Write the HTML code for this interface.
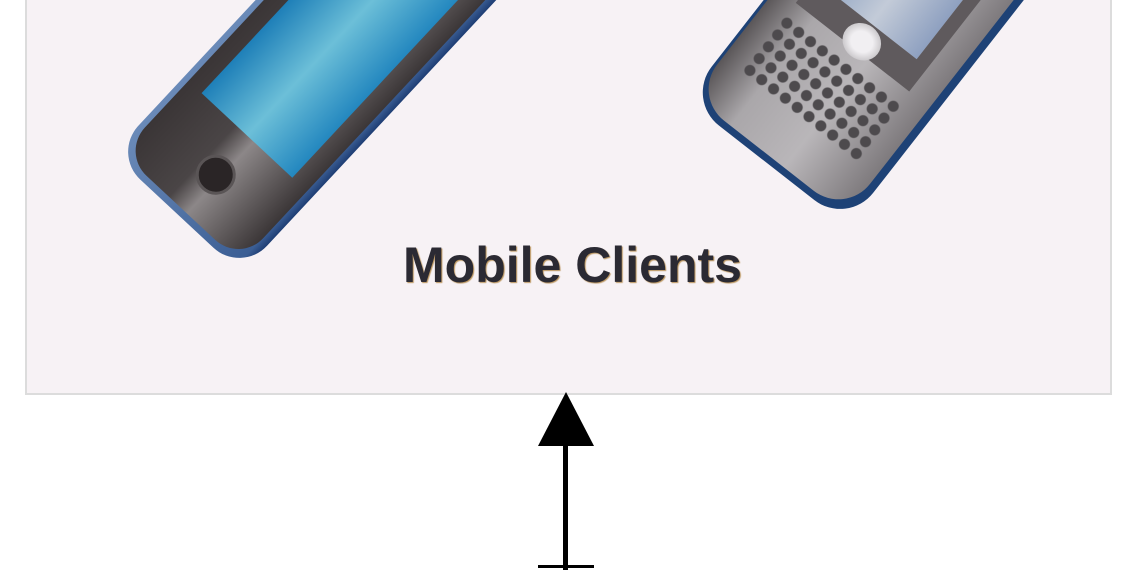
<!DOCTYPE html>
<html><head><style>
body{margin:0;width:1140px;height:570px;background:#fff;overflow:hidden;position:relative;font-family:"Liberation Sans",sans-serif}
.box{position:absolute;left:25px;top:-5px;width:1083px;height:396px;background:#f7f2f5;border:2px solid #dcdcdc}
.ip{position:absolute;left:232px;top:-150px;width:176px;height:420px;border-radius:38px;background:linear-gradient(90deg,#6a8ab8,#3b5e94 95%,#1e3d73);transform:rotate(43deg)}
.ip .in{position:absolute;left:6px;top:5px;right:8px;bottom:7px;border-radius:34px;background:linear-gradient(90deg,#3a3536,#4a4546 40%,#8c8788 55%,#3b3637)}
.ip .scr{position:absolute;left:18px;right:20px;top:40px;height:270px;background:linear-gradient(90deg,#1e7fb8,#6cbfd8 50%,#2387bf)}
.ip .btn{position:absolute;left:64px;top:340px;width:34px;height:34px;border-radius:50%;background:#2a2526;border:3px solid #5a5556}
.bb{position:absolute;left:778px;top:-168px;width:205px;height:370px;border-radius:42px;background:#1e4276;transform:rotate(38deg)}
.bb .in{position:absolute;left:3px;top:2px;right:8px;bottom:7px;border-radius:40px;background:linear-gradient(90deg,#5a5658,#aaa7aa 25%,#b9b6b9 60%,#7e7a7d)}
.bb .scr{position:absolute;left:24px;right:26px;top:80px;height:100px;background:linear-gradient(90deg,#8fa3c2,#c3cbd8 50%,#8ea0c0);border:14px solid #5f5a5d;border-bottom-width:30px}
.bb .tb{position:absolute;left:80px;top:196px;width:40px;height:36px;border-radius:50%;background:radial-gradient(#f1eff2 40%,#a8a5a8)}
.bb .keys{position:absolute;left:22px;top:238px;width:150px;height:75px;background-image:radial-gradient(circle,#4d4a4d 5px,transparent 6px);background-size:15px 15px}
.t{position:absolute;left:0;width:1145px;top:236px;text-align:center;font-weight:bold;font-size:50px;color:#2b2a33;text-shadow:1px 1px 1px #b8925a}
.head{position:absolute;left:538px;top:392px;width:0;height:0;border-left:28px solid transparent;border-right:28px solid transparent;border-bottom:54px solid #000}
.shaft{position:absolute;left:563px;top:440px;width:5px;height:130px;background:#000}
.cb{position:absolute;left:538px;top:565px;width:56px;height:3px;background:#000}
</style></head><body>
<div class="box"></div>
<div class="ip"><div class="in"><div class="scr"></div><div class="btn"></div></div></div>
<div class="bb"><div class="in"><div class="scr"></div><div class="tb"></div><div class="keys"></div></div></div>
<div class="t">Mobile Clients</div>
<div class="head"></div><div class="shaft"></div><div class="cb"></div>
</body></html>
